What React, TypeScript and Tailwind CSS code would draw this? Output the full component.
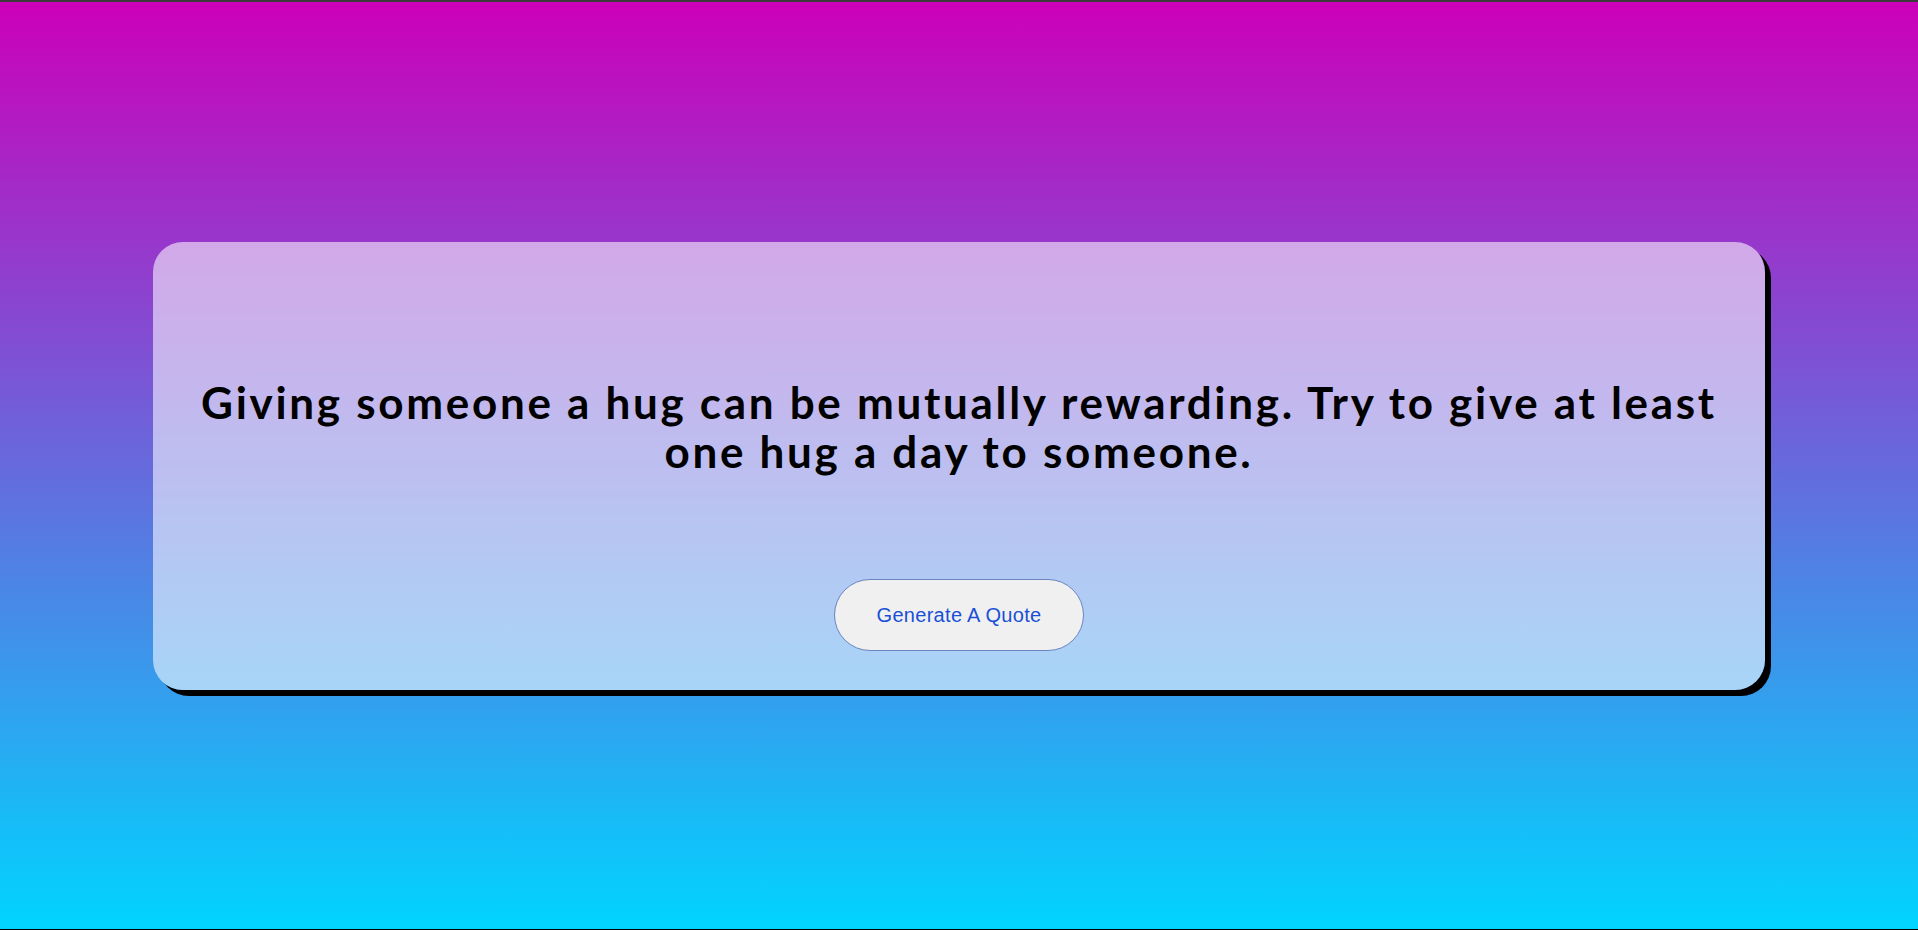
export default function App() {
    return (
        <div className="h-screen w-full border-t-2 border-t-[#3a3a3a] border-b border-b-black bg-[linear-gradient(#cc00b9,#00d4ff)] flex items-center justify-center">
            <div className="w-[1612px] h-[448px] rounded-[30px] bg-[rgba(255,255,255,0.57)] shadow-[6px_6px_0_#000] flex flex-col items-center pt-[136px] px-8">
                <h1 className="text-center font-bold text-black text-[44px] leading-[49px] tracking-[2.7px] font-['Lato',sans-serif]">
                    Giving someone a hug can be mutually rewarding. Try to give at least one hug a day to someone.
                </h1>
                <button className="mt-[103px] w-[250px] h-[72px] rounded-full border border-[#6b84bf] bg-[#f0f0f0] text-[#1a4fd6] text-[20px] tracking-[0.3px] font-['Liberation_Sans',Arial,sans-serif]">
                    Generate A Quote
                </button>
            </div>
        </div>
    );
}
